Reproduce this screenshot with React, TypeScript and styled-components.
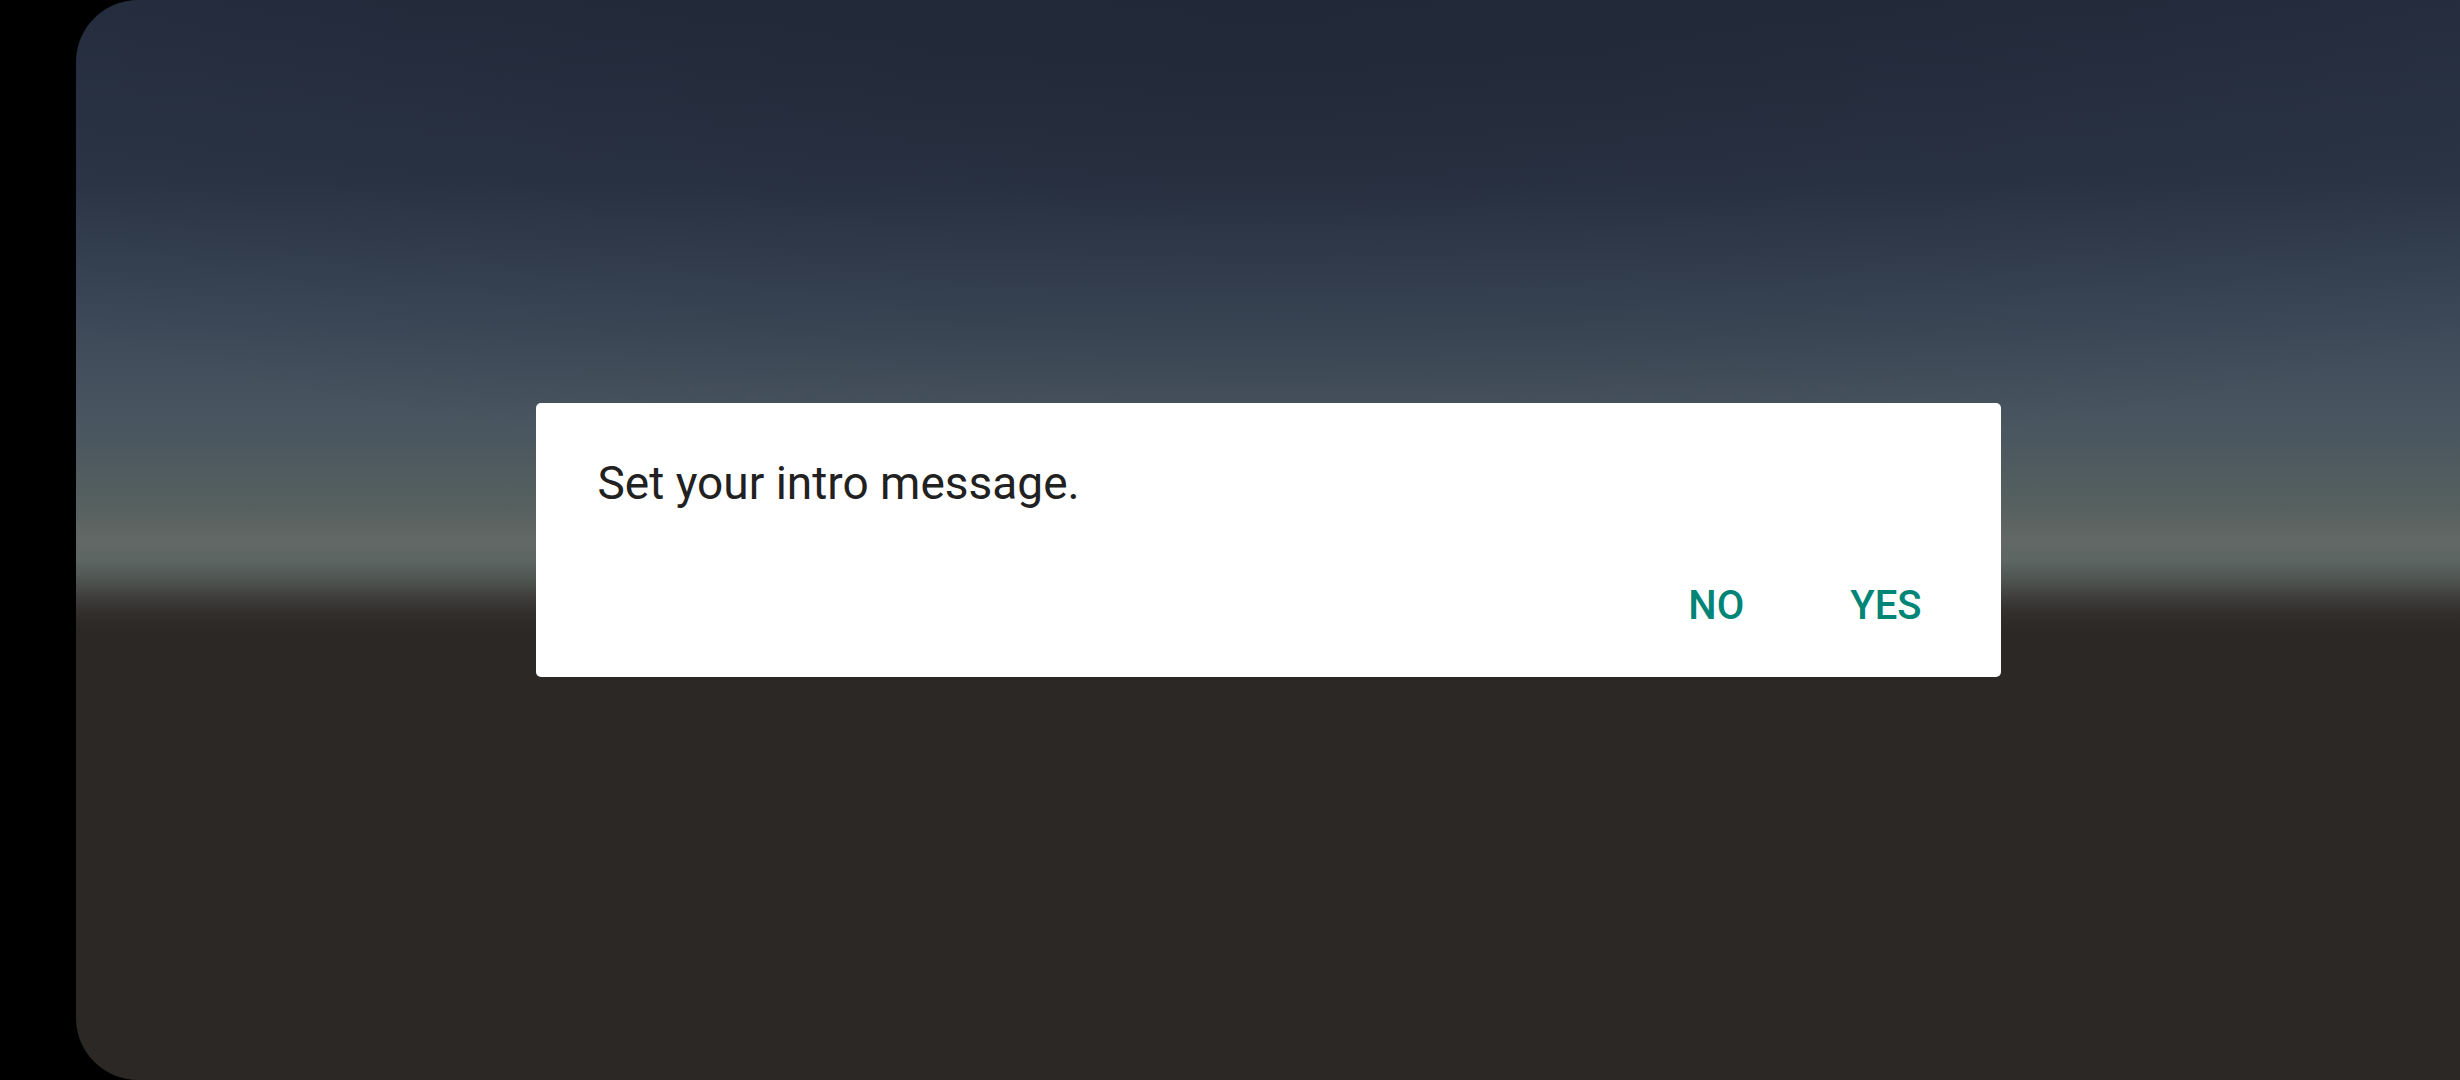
import React from "react";
import styled, { createGlobalStyle } from "styled-components";

const GlobalStyle = createGlobalStyle`
  html, body {
    margin: 0;
    padding: 0;
    background: #000;
  }
  * { box-sizing: border-box; }
`;

const Screen = styled.div`
  width: 2460px;
  height: 1080px;
  display: flex;
  padding-left: 76px;
  background: #000;
  overflow: hidden;
`;

const Viewport = styled.div`
  flex: 1;
  display: flex;
  align-items: center;
  justify-content: center;
  border-radius: 62px 0 0 62px;
  overflow: hidden;
  background:
    radial-gradient(ellipse 70% 45% at 50% 0%, rgba(24, 28, 40, 0.4), rgba(24, 28, 40, 0) 100%),
    linear-gradient(
      to bottom,
      #262f40 0px,
      #2c3647 180px,
      #3a4656 300px,
      #4a5660 430px,
      #56615f 508px,
      #636866 540px,
      #5c6663 560px,
      #4f5451 580px,
      #3e3d3b 598px,
      #312e2c 614px,
      #2b2826 630px,
      #2b2826 100%
    );
`;

const Dialog = styled.div`
  width: 1465px;
  background: #ffffff;
  border-radius: 5px;
  display: flex;
  flex-direction: column;
  padding: 53px 79px 48px 62px;
  font-family: Roboto, "Noto Sans", "Liberation Sans", sans-serif;
`;

const Message = styled.p`
  margin: 0;
  font-size: 46px;
  line-height: 54px;
  font-weight: 400;
  color: #212121;
`;

const ButtonRow = styled.div`
  display: flex;
  justify-content: flex-end;
  gap: 106px;
  margin-top: 72px;
`;

const DialogButton = styled.button`
  border: none;
  background: transparent;
  padding: 0;
  margin: 0;
  font-family: Roboto, "Noto Sans", "Liberation Sans", sans-serif;
  font-size: 40px;
  line-height: 47px;
  font-weight: 500;
  color: #008577;
  text-transform: uppercase;
  cursor: pointer;
`;

export default function App() {
  return (
    <>
      <GlobalStyle />
      <Screen>
        <Viewport>
          <Dialog>
            <Message>Set your intro message.</Message>
            <ButtonRow>
              <DialogButton>No</DialogButton>
              <DialogButton>Yes</DialogButton>
            </ButtonRow>
          </Dialog>
        </Viewport>
      </Screen>
    </>
  );
}
